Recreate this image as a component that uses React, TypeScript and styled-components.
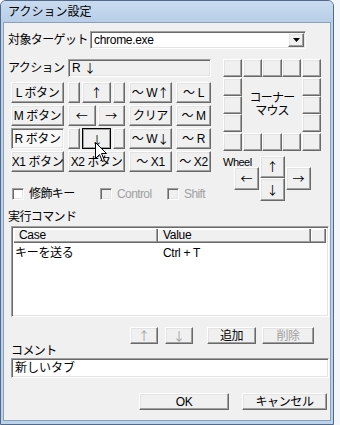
import React from 'react';
import styled, { createGlobalStyle, css } from 'styled-components';

const Global = createGlobalStyle`
  html, body { margin: 0; padding: 0; background: #f3f6fa; }
  body {
    font-family: "Liberation Sans", "Noto Sans CJK JP", sans-serif;
    font-size: 12px;
    color: #000;
  }
  * { box-sizing: border-box; }
`;

const raised = css`
  border: 1px solid;
  border-color: #fff #696969 #696969 #fff;
  box-shadow: inset -1px -1px #a0a0a0, inset 1px 1px #e3e3e3;
`;

const sunken = css`
  border: 1px solid;
  border-color: #a0a0a0 #fff #fff #a0a0a0;
  box-shadow: inset 1px 1px #696969, inset -1px -1px #e3e3e3;
`;

const Window = styled.div`
  width: 334px;
  height: 425px;
  border: 1px solid #53698a;
  border-radius: 6px 6px 0 0;
  background: #bcd2ea;
  padding: 0 2px 3px;
  display: flex;
  flex-direction: column;
  overflow: hidden;
`;

const TitleBar = styled.div`
  height: 21px;
  margin: 0 -2px;
  padding-left: 7px;
  display: flex;
  align-items: center;
  background: linear-gradient(#c9dbef, #b8cee8);
  font-size: 12px;
  line-height: 14px;
`;

const Body = styled.div`
  flex: 1;
  background: #f0f0f0;
  border: 1px solid #8c9fb8;
  display: flex;
  flex-direction: column;
`;

const Arrow = styled.span`
  font-family: "Noto Sans CJK JP", sans-serif;
  font-size: 12px;
  letter-spacing: 0;
`;

const Label = styled.span<{ $w?: number; $disabled?: boolean }>`
  display: inline-block;
  width: ${(p) => (p.$w ? `${p.$w}px` : 'auto')};
  flex: none;
  line-height: 14px;
  white-space: nowrap;
  letter-spacing: -0.6px;
  color: ${(p) => (p.$disabled ? '#a0a0a0' : '#000')};
`;

const TargetRow = styled.div`
  margin-top: 8px;
  padding-left: 4px;
  height: 18px;
  display: flex;
  align-items: center;
`;

const Combo = styled.div`
  ${sunken};
  width: 216px;
  height: 18px;
  background: #fff;
  display: flex;
  align-items: center;
  padding: 0 1px 0 3px;
`;

const ComboText = styled.span`
  flex: 1;
  line-height: 14px;
  letter-spacing: -0.3px;
`;

const DropButton = styled.div`
  ${raised};
  width: 16px;
  height: 14px;
  background: #f0f0f0;
  display: flex;
  align-items: center;
  justify-content: center;
`;

const Main = styled.div`
  margin-top: 10px;
  padding-left: 4px;
  display: flex;
  gap: 12px;
`;

const LeftCol = styled.div`
  width: 203px;
  display: flex;
  flex-direction: column;
`;

const ActionRow = styled.div`
  height: 18px;
  display: flex;
  align-items: center;
`;

const Field = styled.div<{ $w: number; $bg?: string }>`
  ${sunken};
  width: ${(p) => p.$w}px;
  height: 100%;
  background: ${(p) => p.$bg || '#fff'};
  display: flex;
  align-items: center;
  padding-left: 3px;
  line-height: 14px;
  white-space: nowrap;
`;

const ButtonGrid = styled.div`
  margin: 5px 0 0 3px;
  display: grid;
  grid-template-columns: 53px 57px 43px 35px;
  grid-auto-rows: 21px;
  column-gap: 4px;
  row-gap: 2px;
`;

const Btn = styled.div<{ $state?: 'pressed' | 'checked'; $disabled?: boolean }>`
  position: relative;
  ${raised};
  background: #f0f0f0;
  display: flex;
  align-items: center;
  justify-content: center;
  line-height: 14px;
  white-space: nowrap;
  letter-spacing: -0.4px;
  min-width: 0;
  color: ${(p) => (p.$disabled ? '#a0a0a0' : '#000')};
  ${(p) =>
    p.$state === 'checked' &&
    css`
      border-color: #a0a0a0 #fff #fff #a0a0a0;
      box-shadow: inset 1px 1px #696969, inset -1px -1px #e3e3e3;
      background: #f9f9f9;
    `}
  ${(p) =>
    p.$state === 'pressed' &&
    css`
      border-color: #000;
      box-shadow: inset 1px 1px #a0a0a0, inset -1px -1px #a0a0a0;
      padding: 2px 0 0 1px;
    `}
`;

const Split = styled.div<{ $cols: string }>`
  display: grid;
  grid-template-columns: ${(p) => p.$cols};
  column-gap: 2px;
`;

const CheckRow = styled.div`
  margin: 15px 0 0 4px;
  height: 13px;
  display: flex;
  align-items: center;
`;

const CheckItem = styled.div<{ $w?: number }>`
  width: ${(p) => (p.$w ? `${p.$w}px` : 'auto')};
  display: flex;
  align-items: center;
  gap: 5px;
`;

const Box = styled.span<{ $disabled?: boolean }>`
  ${sunken};
  width: 12px;
  height: 12px;
  flex: none;
  background: ${(p) => (p.$disabled ? '#f0f0f0' : '#fff')};
`;

const RightCol = styled.div`
  width: 97px;
  display: flex;
  flex-direction: column;
`;

const CornerGrid = styled.div`
  display: grid;
  grid-template-columns: 19px 58px 19px;
  grid-template-rows: 18px 54px 18px;
  gap: 1px;
`;

const Strip = styled.div<{ $dir: 'row' | 'column' }>`
  display: flex;
  flex-direction: ${(p) => p.$dir};
  & > * { flex: 1; }
`;

const CornerText = styled.div`
  display: flex;
  flex-direction: column;
  align-items: center;
  justify-content: center;
  line-height: 13px;
  letter-spacing: -0.8px;
  & > span { display: block; height: 13px; }
`;

const Wheel = styled.div`
  margin-top: 5px;
  display: grid;
  grid-template-columns: 10px 25px 25px 25px;
  grid-template-rows: 11px 11px 12px 11px;
  column-gap: 1px;
`;

const WheelLabel = styled.span`
  grid-column: 1 / 3;
  grid-row: 1;
  font-size: 11px;
  line-height: 11px;
  margin-top: 1px;
  letter-spacing: -0.5px;
`;

const WheelBtn = styled(Btn)<{ $col: number; $row: number }>`
  grid-column: ${(p) => p.$col};
  grid-row: ${(p) => `${p.$row} / span 2`};
`;

const Cursor = styled.svg`
  position: absolute;
  left: 12px;
  top: 13px;
  z-index: 3;
  pointer-events: none;
`;

const SectionLabel = styled.div<{ $top: number; $left: number }>`
  margin: ${(p) => p.$top}px 0 0 ${(p) => p.$left}px;
  line-height: 13px;
  height: 13px;
  letter-spacing: -0.6px;
  white-space: nowrap;
`;

const List = styled.div`
  ${sunken};
  margin: 2px 0 0 7px;
  width: 318px;
  height: 91px;
  background: #fff;
  padding: 2px;
`;

const ListHeader = styled.div`
  display: grid;
  grid-template-columns: 144px 153px 1fr;
  height: 14px;
`;

const HeaderCell = styled.div`
  border-right: 1px solid #696969;
  border-bottom: 1px solid #696969;
  box-shadow: inset -1px -1px #a0a0a0, inset 1px 1px #fff;
  background: #f0f0f0;
  padding-left: 5px;
  line-height: 13px;
  font-size: 12px;
  letter-spacing: -0.3px;
`;

const ListRow = styled.div`
  display: grid;
  grid-template-columns: 148px 1fr;
  margin-top: 3px;
  line-height: 14px;
  padding-left: 1px;
  letter-spacing: -0.3px;
`;

const ToolRow = styled.div`
  margin: 10px 0 0 126px;
  height: 17px;
  display: flex;
  gap: 14px;
`;

const Group = styled.div<{ $gap: number }>`
  display: flex;
  gap: ${(p) => p.$gap}px;
`;

const SmallBtn = styled(Btn)<{ $w: number }>`
  width: ${(p) => p.$w}px;
  height: 17px;
`;

const CommentField = styled(Field)`
  margin: 0 0 0 7px;
  height: 20px;
  flex: none;
`;

const DialogRow = styled.div`
  margin-top: 15px;
  height: 17px;
  display: flex;
  justify-content: flex-end;
  gap: 13px;
  padding-right: 3px;
`;

const Blank = () => <Btn />;

export default function App() {
  return (
    <>
      <Global />
      <Window>
        <TitleBar>アクション設定</TitleBar>
        <Body>
          <TargetRow>
            <Label $w={82}>対象ターゲット</Label>
            <Combo>
              <ComboText>chrome.exe</ComboText>
              <DropButton>
                <svg width="7" height="4" viewBox="0 0 7 4">
                  <polygon points="0,0 7,0 3.5,4" fill="#000" />
                </svg>
              </DropButton>
            </Combo>
          </TargetRow>

          <Main>
            <LeftCol>
              <ActionRow>
                <Label $w={60}>アクション</Label>
                <Field $w={143} $bg="#f0f0f0">
                  R&nbsp;<Arrow>↓</Arrow>
                </Field>
              </ActionRow>

              <ButtonGrid>
                <Btn>L ボタン</Btn>
                <Split $cols="12px 29px 12px">
                  <Blank />
                  <Btn><Arrow>↑</Arrow></Btn>
                  <Blank />
                </Split>
                <Btn>～ W<Arrow>↑</Arrow></Btn>
                <Btn>～ L</Btn>

                <Btn>M ボタン</Btn>
                <Split $cols="1fr 1fr">
                  <Btn><Arrow>←</Arrow></Btn>
                  <Btn><Arrow>→</Arrow></Btn>
                </Split>
                <Btn>クリア</Btn>
                <Btn>～ M</Btn>

                <Btn $state="checked">R ボタン</Btn>
                <Split $cols="12px 29px 12px">
                  <Blank />
                  <Btn $state="pressed">
                    <Arrow>↓</Arrow>
                    <Cursor width="13" height="21" viewBox="0 0 13 21">
                      <polygon
                        points="0.5,0.5 0.5,16.5 4.5,12.5 7.5,19.5 9.5,18.5 6.5,11.5 11.5,11.5"
                        fill="#fff"
                        stroke="#000"
                        strokeWidth="1"
                      />
                    </Cursor>
                  </Btn>
                  <Blank />
                </Split>
                <Btn>～ W<Arrow>↓</Arrow></Btn>
                <Btn>～ R</Btn>

                <Btn>X1 ボタン</Btn>
                <Btn>X2 ボタン</Btn>
                <Btn>～ X1</Btn>
                <Btn>～ X2</Btn>
              </ButtonGrid>

              <CheckRow>
                <CheckItem $w={88}>
                  <Box />
                  <Label>修飾キー</Label>
                </CheckItem>
                <CheckItem $w={67}>
                  <Box $disabled />
                  <Label $disabled>Control</Label>
                </CheckItem>
                <CheckItem>
                  <Box $disabled />
                  <Label $disabled>Shift</Label>
                </CheckItem>
              </CheckRow>
            </LeftCol>

            <RightCol>
              <CornerGrid>
                <Btn />
                <Strip $dir="row">
                  <Btn />
                  <Btn />
                  <Btn />
                </Strip>
                <Btn />
                <Strip $dir="column">
                  <Btn />
                  <Btn />
                  <Btn />
                </Strip>
                <CornerText>
                  <span>コーナー</span>
                  <span>マウス</span>
                </CornerText>
                <Strip $dir="column">
                  <Btn />
                  <Btn />
                  <Btn />
                </Strip>
                <Btn />
                <Strip $dir="row">
                  <Btn />
                  <Btn />
                  <Btn />
                </Strip>
                <Btn />
              </CornerGrid>

              <Wheel>
                <WheelLabel>Wheel</WheelLabel>
                <WheelBtn $col={3} $row={1}><Arrow>↑</Arrow></WheelBtn>
                <WheelBtn $col={2} $row={2}><Arrow>←</Arrow></WheelBtn>
                <WheelBtn $col={4} $row={2}><Arrow>→</Arrow></WheelBtn>
                <WheelBtn $col={3} $row={3}><Arrow>↓</Arrow></WheelBtn>
              </Wheel>
            </RightCol>
          </Main>

          <SectionLabel $top={10} $left={4}>実行コマンド</SectionLabel>
          <List>
            <ListHeader>
              <HeaderCell>Case</HeaderCell>
              <HeaderCell>Value</HeaderCell>
              <HeaderCell />
            </ListHeader>
            <ListRow>
              <span>キーを送る</span>
              <span>Ctrl + T</span>
            </ListRow>
          </List>

          <ToolRow>
            <Group $gap={7}>
              <SmallBtn $w={28} $disabled><Arrow>↑</Arrow></SmallBtn>
              <SmallBtn $w={28} $disabled><Arrow>↓</Arrow></SmallBtn>
            </Group>
            <Group $gap={6}>
              <SmallBtn $w={49}>追加</SmallBtn>
              <SmallBtn $w={52} $disabled>削除</SmallBtn>
            </Group>
          </ToolRow>

          <SectionLabel $top={1} $left={7}>コメント</SectionLabel>
          <CommentField $w={318}>新しいタブ</CommentField>

          <DialogRow>
            <SmallBtn $w={90}>OK</SmallBtn>
            <SmallBtn $w={85}>キャンセル</SmallBtn>
          </DialogRow>
        </Body>
      </Window>
    </>
  );
}
